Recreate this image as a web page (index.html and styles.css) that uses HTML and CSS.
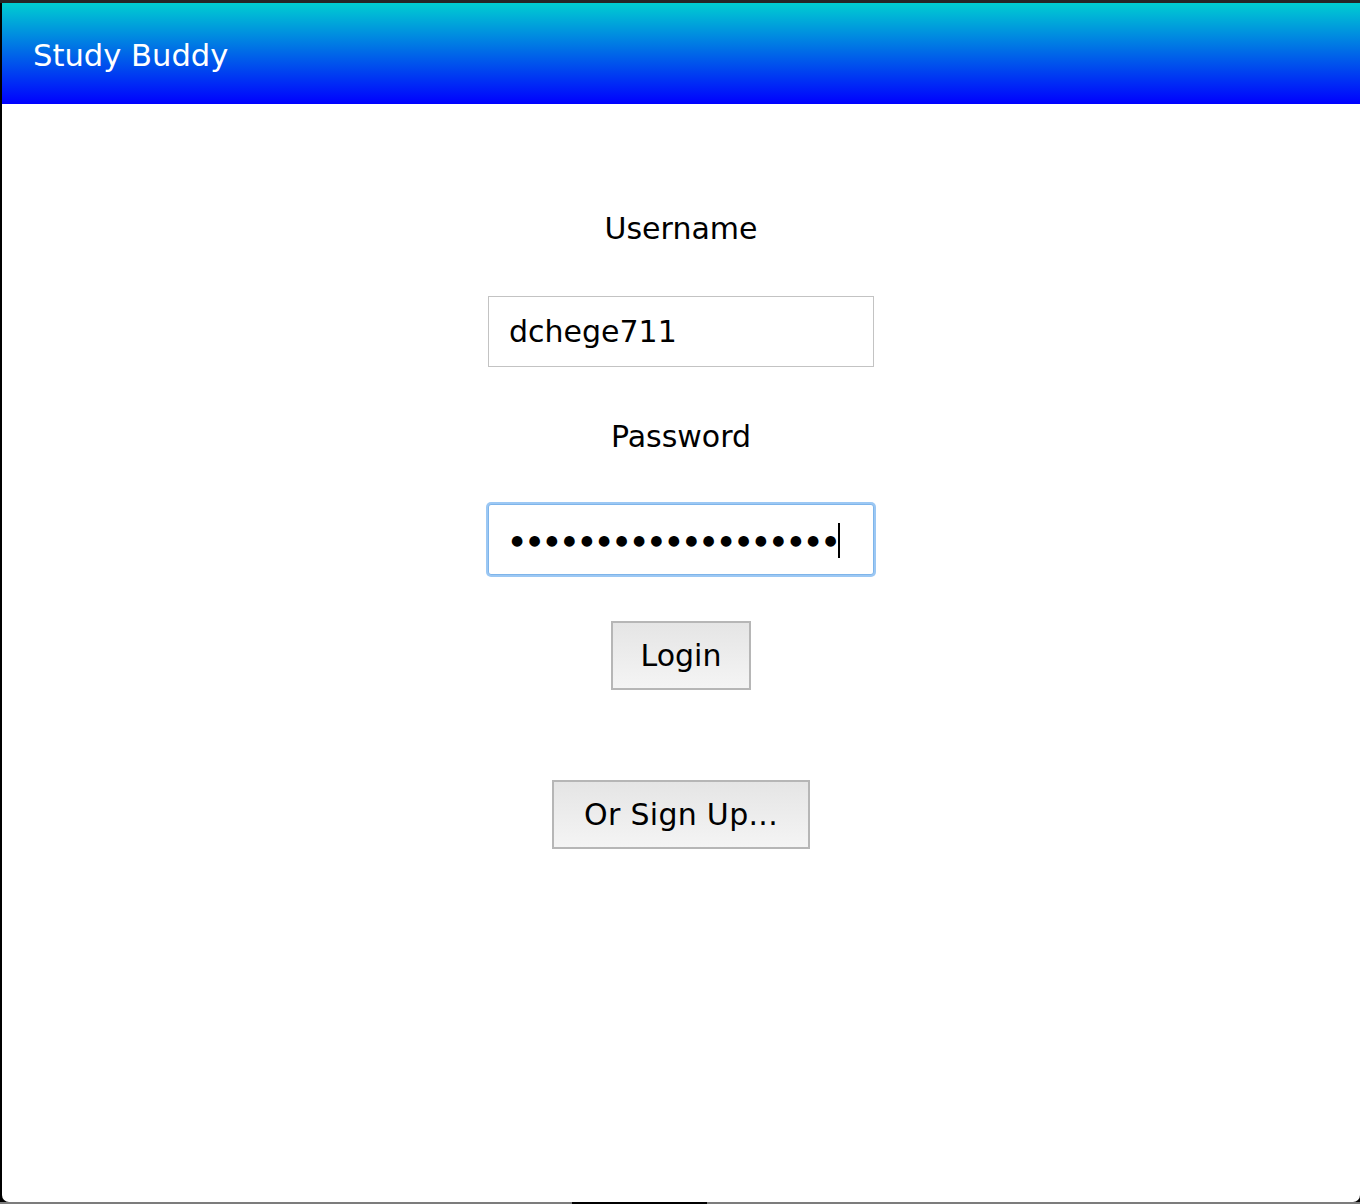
FILE: index.html
```html
<!DOCTYPE html>
<html lang="en">
<head>
<meta charset="utf-8">
<title>Study Buddy</title>
<link rel="stylesheet" href="styles.css">
</head>
<body>
<div class="window">
  <header class="topbar">
    <h1 class="brand">Study Buddy</h1>
  </header>
  <main class="login">
    <label class="label" for="username">Username</label>
    <input class="field" id="username" type="text" value="dchege711">
    <label class="label label-pass">Password</label>
    <div class="field field-focus" role="textbox" aria-label="Password"><span class="dots">●●●●●●●●●●●●●●●●●●●</span><span class="caret"></span></div>
    <button class="btn btn-login" type="button">Login</button>
    <button class="btn btn-signup" type="button">Or Sign Up...</button>
  </main>
</div>
<div class="dock">
  <span class="dock-gray dock-left"></span>
  <span class="dock-black"></span>
  <span class="dock-gray"></span>
</div>
</body>
</html>
```

FILE: styles.css
```css
html, body {
  margin: 0;
  padding: 0;
}
body {
  background: #000;
  width: 1360px;
  height: 1204px;
  overflow: hidden;
  display: flex;
  flex-direction: column;
  font-family: "DejaVu Sans", Verdana, sans-serif;
  color: #000;
  border-top: 3px solid #262626;
  box-sizing: border-box;
}
.window {
  margin-left: 2px;
  width: 1358px;
  height: 1199px;
  background: #fff;
  border-radius: 0 0 7px 7px;
  overflow: hidden;
  display: flex;
  flex-direction: column;
}
.topbar {
  height: 101px;
  flex: none;
  background: linear-gradient(#00ced1, #0000ff);
  display: flex;
  align-items: center;
  padding-left: 31px;
  padding-top: 4px;
  box-sizing: border-box;
}
.brand {
  margin: 0;
  font-size: 30.6px;
  font-weight: normal;
  color: #fff;
  line-height: 35px;
}
.login {
  display: flex;
  flex-direction: column;
  align-items: center;
  padding-top: 107px;
}
.label {
  font-size: 30px;
  line-height: 35px;
  height: 35px;
}
.field {
  margin-top: 50px;
  width: 386px;
  height: 71px;
  box-sizing: border-box;
  border: 1px solid #c3c3c3;
  padding: 0 0 0 20px;
  font-family: "DejaVu Sans", Verdana, sans-serif;
  font-size: 30px;
  color: #000;
  background: #fff;
  outline: none;
  display: flex;
  align-items: center;
}
.label-pass {
  margin-top: 52px;
}
.field-focus {
  height: 71px;
  border: 1px solid #7fb5ea;
  border-radius: 3px;
  box-shadow: 0 0 0 2px #9cc8f4;
  padding-left: 22px;
  padding-top: 2px;
}
.dots {
  font-size: 14px;
  letter-spacing: 5.2px;
  line-height: 35px;
  margin-right: -3.5px;
}
.caret {
  width: 2px;
  height: 35px;
  background: #000;
  margin-left: 0;
}
.btn {
  font-family: "DejaVu Sans", Verdana, sans-serif;
  font-size: 30px;
  color: #000;
  height: 69px;
  padding: 0 26px;
  border: 2px solid #b6b6b6;
  background: linear-gradient(#e5e5e5, #f4f4f4);
  border-radius: 0;
  line-height: 35px;
}
.btn-login {
  margin-top: 46px;
  width: 140px;
}
.btn-signup {
  margin-top: 90px;
  width: 258px;
  letter-spacing: 0.3px;
}
.dock {
  display: flex;
  height: 2px;
  flex: none;
}
.dock-gray {
  flex: 1;
  background: #7c7c7c;
}
.dock-left {
  flex: none;
  width: 572px;
}
.dock-black {
  width: 135px;
  background: #000;
}
```
